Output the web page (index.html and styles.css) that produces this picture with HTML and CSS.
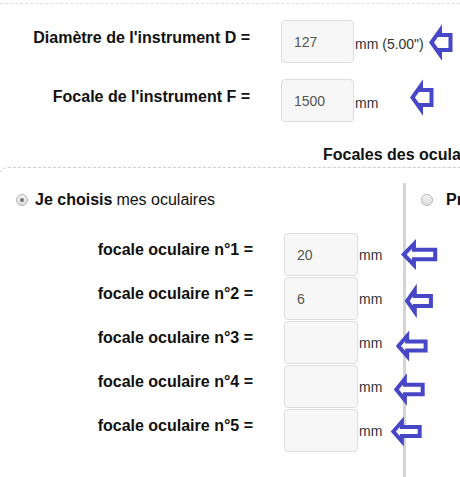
FILE: index.html
```html
<!DOCTYPE html>
<html lang="fr">
<head>
    <meta charset="UTF-8">
    <meta name="viewport" content="width=device-width, initial-scale=1.0">
    <title>Calcul des grossissements</title>
    <link rel="stylesheet" href="styles.css">
</head>
<body>
    <div class="top-rule"></div>

    <div class="params">
        <div class="param-row">
            <label class="param-label">Diamètre de l'instrument D =</label>
            <input class="field" type="text" value="127">
            <span class="unit">mm (5.00")</span>
            <svg class="arrow arrow-d" viewBox="0 0 24 29" preserveAspectRatio="none">
                <polygon points="2.5,14.5 11,2.5 11,7 21.5,7 21.5,22 11,22 11,26.5"/>
            </svg>
        </div>
        <div class="param-row">
            <label class="param-label">Focale de l'instrument F =</label>
            <input class="field" type="text" value="1500">
            <span class="unit">mm</span>
            <svg class="arrow arrow-f" viewBox="0 0 24 29" preserveAspectRatio="none">
                <polygon points="2.5,14.5 11,2.5 11,7 21.5,7 21.5,22 11,22 11,26.5"/>
            </svg>
        </div>
    </div>

    <h2 class="section-title">Focales des oculaires</h2>

    <div class="ocular-box">
        <div class="col-left">
            <div class="choice">
                <span class="radio checked"></span>
                <b>Je choisis</b> mes oculaires
            </div>

            <div class="ocular-row">
                <label class="ocular-label">focale oculaire n°1 =</label>
                <input class="field" type="text" value="20">
                <span class="unit">mm</span>
                <svg class="arrow a1" viewBox="0 0 40 26" preserveAspectRatio="none">
                    <polygon points="3,13 14,2 14,8 37,8 37,18 14,18 14,24"/>
                </svg>
            </div>
            <div class="ocular-row">
                <label class="ocular-label">focale oculaire n°2 =</label>
                <input class="field" type="text" value="6">
                <span class="unit">mm</span>
                <svg class="arrow a2" viewBox="0 0 40 26" preserveAspectRatio="none">
                    <polygon points="3,13 14,2 14,8 37,8 37,18 14,18 14,24"/>
                </svg>
            </div>
            <div class="ocular-row">
                <label class="ocular-label">focale oculaire n°3 =</label>
                <input class="field" type="text" value="">
                <span class="unit">mm</span>
                <svg class="arrow a3" viewBox="0 0 40 26" preserveAspectRatio="none">
                    <polygon points="3,13 14,2 14,8 37,8 37,18 14,18 14,24"/>
                </svg>
            </div>
            <div class="ocular-row">
                <label class="ocular-label">focale oculaire n°4 =</label>
                <input class="field" type="text" value="">
                <span class="unit">mm</span>
                <svg class="arrow a4" viewBox="0 0 40 26" preserveAspectRatio="none">
                    <polygon points="3,13 14,2 14,8 37,8 37,18 14,18 14,24"/>
                </svg>
            </div>
            <div class="ocular-row">
                <label class="ocular-label">focale oculaire n°5 =</label>
                <input class="field" type="text" value="">
                <span class="unit">mm</span>
                <svg class="arrow a5" viewBox="0 0 40 26" preserveAspectRatio="none">
                    <polygon points="3,13 14,2 14,8 37,8 37,18 14,18 14,24"/>
                </svg>
            </div>
        </div>

        <div class="col-right">
            <div class="choice">
                <span class="radio"></span>
                <b>Propose-moi</b> des oculaires
            </div>
        </div>
    </div>
</body>
</html>
```

FILE: styles.css
```css
/* Mise en page generale */
html, body {
    overflow: hidden;
}
body {
    margin: 0;
    padding: 0;
    background-color: #fff;
    color: #111;
    font-family: "Liberation Sans", Arial, sans-serif;
    font-size: 16px;
}
.top-rule {
    height: 3px;
    border-bottom: 1px dashed #dedede;
}

/* Diametre et focale */
.params {
    padding-top: 16px;
}
.param-row {
    display: flex;
    align-items: flex-start;
    height: 43px;
    margin-bottom: 16px;
}
.param-row:last-child {
    margin-bottom: 0;
}
.param-label {
    width: 250px;
    flex-shrink: 0;
    padding-top: 9px;
    line-height: 18px;
    font-weight: bold;
    text-align: right;
}
.param-row .field {
    width: 73px;
    margin-left: 31px;
}
.param-row .unit {
    margin-left: 1px;
    padding-top: 4px;
    white-space: nowrap;
}

/* Champs de saisie */
.field {
    box-sizing: border-box;
    flex-shrink: 0;
    height: 43px;
    margin: 0;
    padding: 0 12px;
    border: 1px solid #dedede;
    border-radius: 4px;
    background-color: #f7f7f7;
    color: #555;
    font-family: "Liberation Sans", Arial, sans-serif;
    font-size: 14px;
    outline: none;
}
.unit {
    align-self: center;
    flex-shrink: 0;
    color: #333;
    font-size: 14px;
    line-height: 16px;
}

/* Fleches */
.arrow {
    position: relative;
    z-index: 1;
    flex-shrink: 0;
    overflow: visible;
}
.arrow polygon {
    fill: #fff;
    stroke: #4646c6;
    stroke-width: 4;
    stroke-linejoin: miter;
    vector-effect: non-scaling-stroke;
}
.arrow-d { width: 24px; height: 29px; margin-left: 5px; margin-top: 8px; }
.arrow-f { width: 24px; height: 29px; margin-left: 32px; margin-top: 4px; }
.a1 { width: 37px; height: 25px; margin-left: 12px; margin-top: 9px; }
.a2 { width: 28px; height: 26px; margin-left: 16px; margin-top: 11px; }
.a3 { width: 32px; height: 24px; margin-left: 7px; margin-top: 13px; }
.a4 { width: 31px; height: 25px; margin-left: 5px; margin-top: 12px; }
.a5 { width: 31px; height: 23px; margin-left: 2px; margin-top: 11px; }

/* Oculaires */
.section-title {
    margin: 24px 0 3px;
    padding-left: 323px;
    font-size: 16px;
    line-height: 18px;
    white-space: nowrap;
}
.ocular-box {
    display: flex;
    width: 600px;
    height: 320px;
    margin-left: -2px;
    border-top: 1px dashed #cfcfcf;
    border-left: 1px dashed #cfcfcf;
    border-top-left-radius: 10px;
}
.col-left {
    width: 404px;
    flex-shrink: 0;
    padding-top: 23px;
}
.col-right {
    flex: 1;
    margin-top: 15px;
    border-left: 3px solid #d4d4d4;
    padding-top: 8px;
}
.choice {
    display: flex;
    align-items: center;
    padding-left: 17px;
    line-height: 18px;
    white-space: nowrap;
}
.choice b {
    margin-right: 4px;
}
.col-right .choice {
    padding-left: 15px;
}
.radio {
    position: relative;
    box-sizing: border-box;
    width: 12px;
    height: 12px;
    margin-right: 7px;
    border: 1px solid #b4b4b4;
    border-radius: 50%;
    background: linear-gradient(#f4f4f4, #dcdcdc);
}
.col-right .radio {
    margin-right: 13px;
}
.radio.checked::after {
    content: "";
    position: absolute;
    top: 3px;
    left: 3px;
    width: 4px;
    height: 4px;
    border-radius: 50%;
    background-color: #777;
}
.ocular-row {
    display: flex;
    align-items: flex-start;
    height: 44px;
}
.choice + .ocular-row {
    margin-top: 24px;
}
.ocular-label {
    width: 254px;
    flex-shrink: 0;
    padding-top: 8px;
    line-height: 18px;
    font-weight: bold;
    text-align: right;
}
.ocular-row .field {
    width: 74px;
    margin-left: 31px;
}
.ocular-row .unit {
    width: 30px;
    margin-left: 1px;
}
```
